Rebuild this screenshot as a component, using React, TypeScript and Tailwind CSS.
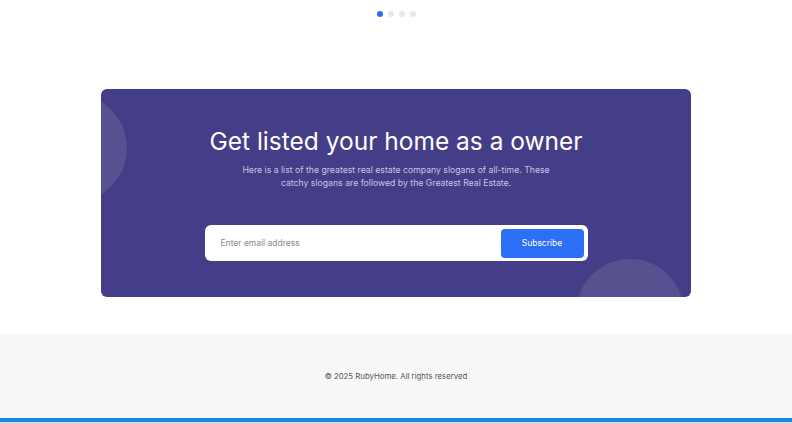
import React from "react";

export default function App() {
  return (
    <div className="w-[792px] h-[424px] bg-white overflow-hidden flex flex-col" style={{ fontFamily: "Inter, 'Noto Sans', sans-serif" }}>
      <div className="flex justify-center gap-[5px] pt-[11px] h-[89px]">
        <span className="w-[6px] h-[6px] rounded-full bg-[#2a6ef5]" />
        <span className="w-[6px] h-[6px] rounded-full bg-[#e6e7eb]" />
        <span className="w-[6px] h-[6px] rounded-full bg-[#e6e7eb]" />
        <span className="w-[6px] h-[6px] rounded-full bg-[#e6e7eb]" />
      </div>
      <div className="flex justify-center">
        <div className="relative w-[590px] h-[208px] rounded-[6px] bg-[#443d87] overflow-hidden flex flex-col items-center">
          <div className="absolute left-[-82px] top-[5px] w-[108px] h-[108px] rounded-full bg-[#57518f]" />
          <div className="absolute left-[475px] top-[170px] w-[108px] h-[108px] rounded-full bg-[#57518f]" />
          <h2 className="relative mt-[37px] text-[24.5px] leading-[30px] text-white font-normal">Get listed your home as a owner</h2>
          <p className="relative mt-[8px] w-[320px] text-center text-[8.7px] leading-[13px] text-[#c9c6e3]">
            Here is a list of the greatest real estate company slogans of all-time. These catchy slogans are followed by the Greatest Real Estate.
          </p>
          <div className="relative mt-[35px] w-[383px] h-[36px] bg-white rounded-[6px] flex items-center justify-between pl-[16px] pr-[4px]">
            <span className="text-[8.5px] text-[#8a8a8f]">Enter email address</span>
            <button className="w-[83px] h-[29px] rounded-[4px] bg-[#2a6ff6] text-white text-[8.5px]">Subscribe</button>
          </div>
        </div>
      </div>
      <div className="h-[37px]" />
      <div className="h-[84px] bg-[#f8f8f8] flex items-center justify-center">
        <span className="text-[7.8px] text-[#555] mt-[1px]">© 2025 RubyHome. All rights reserved</span>
      </div>
      <div className="h-[4px] bg-[#168ae6]" />
      <div className="h-[2px] bg-[#d9d9d9]" />
    </div>
  );
}
